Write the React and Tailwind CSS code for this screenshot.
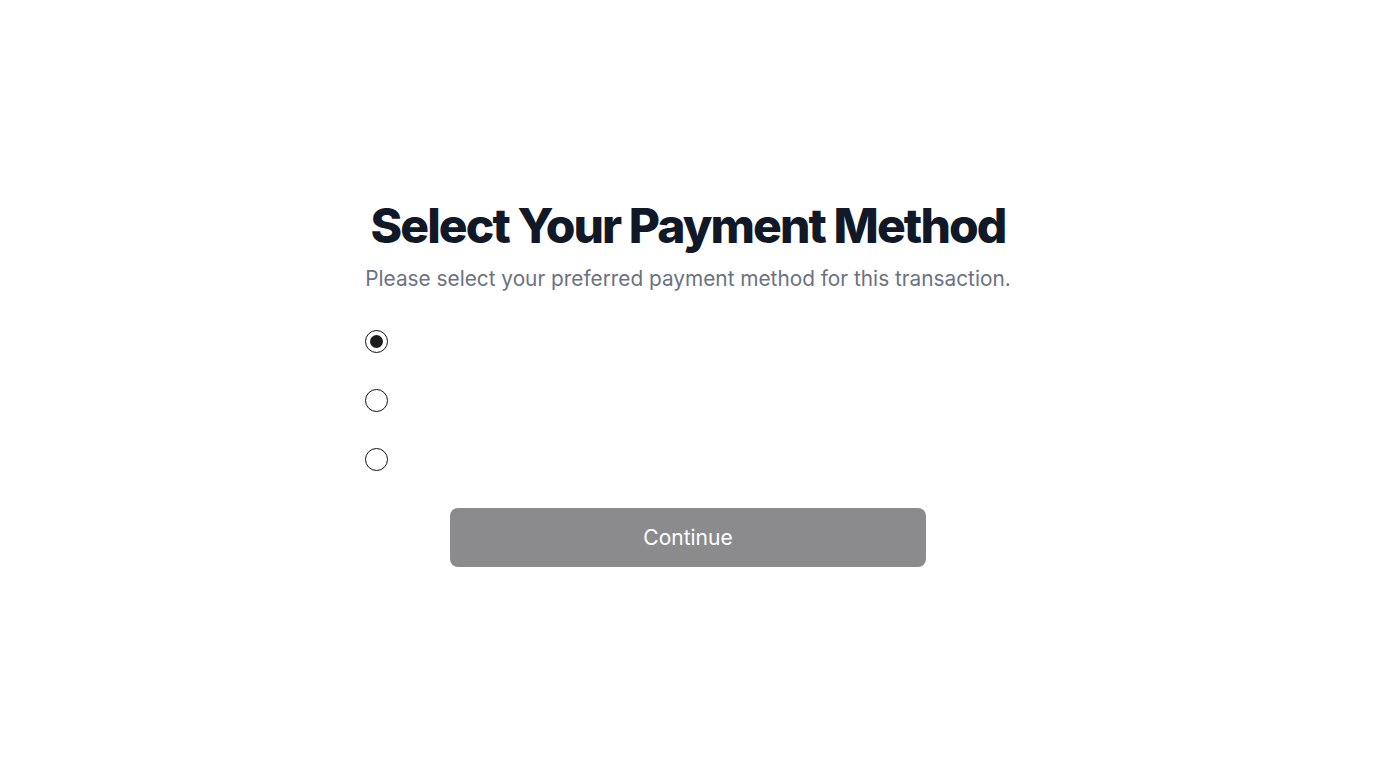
import { useState } from 'react';

const METHODS = ['card', 'paypal', 'bank'];

export default function App() {
    const [selected, setSelected] = useState('card');

    return (
        <div
            className="min-h-screen bg-white flex items-center justify-center"
            style={{ fontFamily: 'Inter, "Noto Sans", sans-serif' }}
        >
            <div className="flex flex-col items-center">
                {/* Header */}
                <h1 className="text-5xl leading-[50px] font-extrabold text-[#111827] tracking-[-0.04em]">
                    Select Your Payment Method
                </h1>
                <p className="mt-3.5 text-[20.8px] leading-7 text-[#6b7280]">
                    Please select your preferred payment method for this transaction.
                </p>

                {/* Options */}
                <div className="w-full mt-[37px] flex flex-col gap-[36px]">
                    {METHODS.map((method) => (
                        <button
                            key={method}
                            onClick={() => setSelected(method)}
                            className="flex items-center h-[23px]"
                        >
                            <span className="w-[23px] h-[23px] rounded-full border-[1.75px] border-[#111] flex items-center justify-center">
                                {selected === method && (
                                    <span className="w-[13px] h-[13px] rounded-full bg-[#1c1c1c]" />
                                )}
                            </span>
                        </button>
                    ))}
                </div>

                {/* Continue */}
                <button className="mt-[37px] w-[476px] h-[59px] rounded-lg bg-[#8b8b8d] text-white text-[21px]">
                    Continue
                </button>
            </div>
        </div>
    );
}
